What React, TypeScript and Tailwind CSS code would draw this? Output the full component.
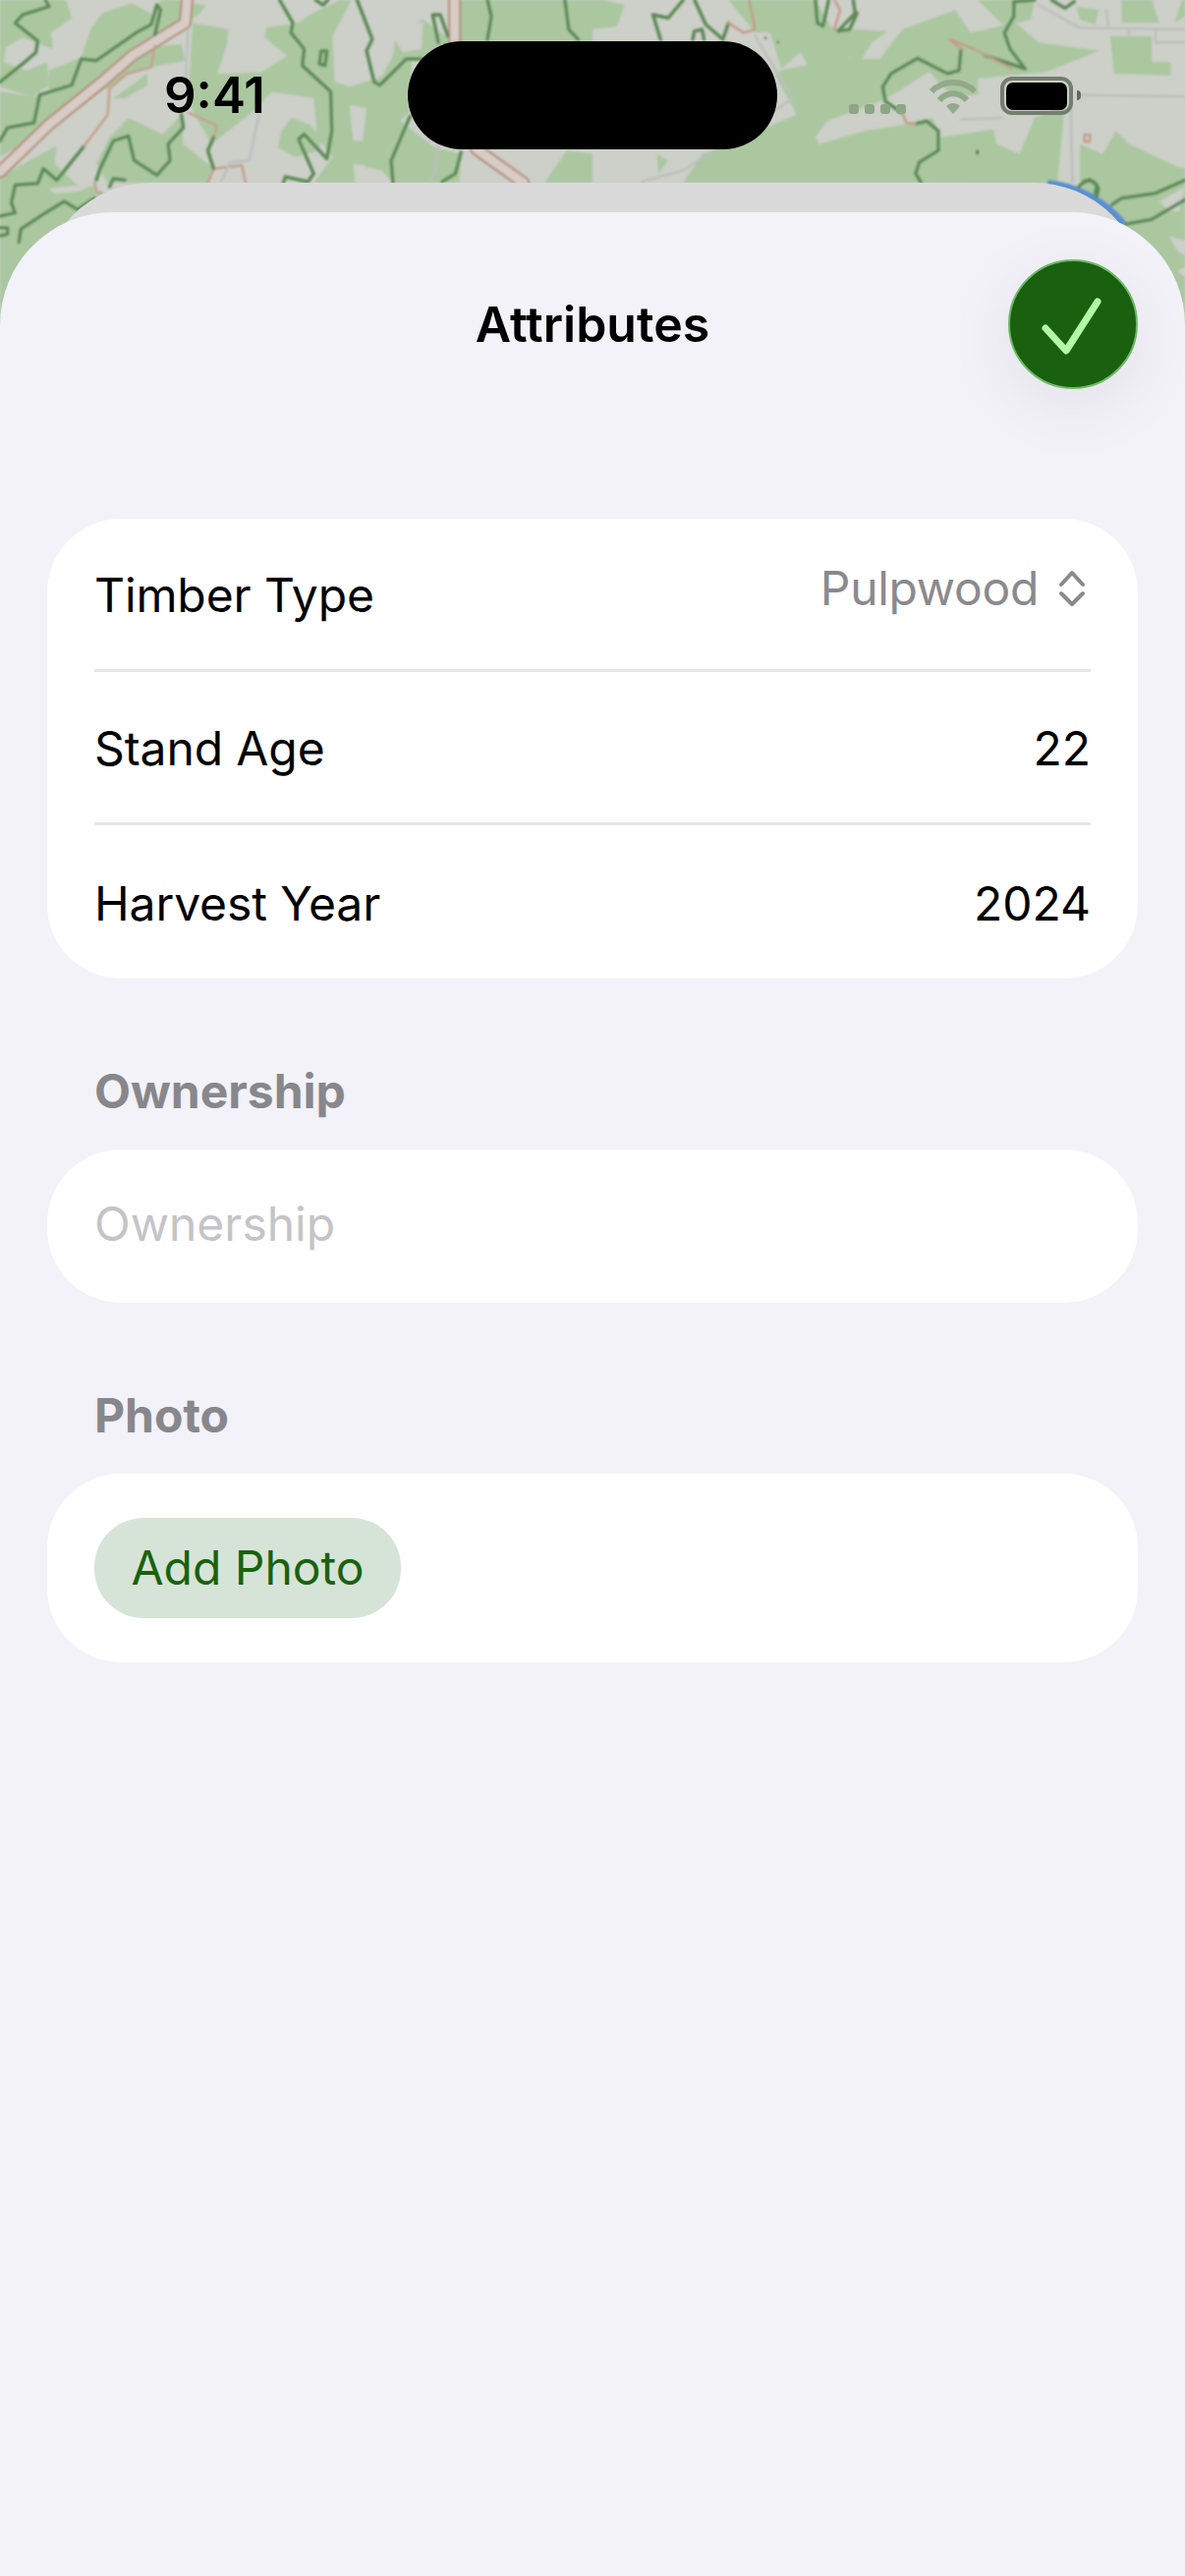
import React from "react";

const GREEN_L = [
  "0,0 175,0 190,55 135,100 140,150 60,115 15,145 10,190 70,215 125,190 130,260 85,295 0,265",
  "270,40 350,10 405,45 425,0 485,0 480,85 420,140 480,135 490,185 400,205 335,225 290,270 225,280 130,285 130,215 215,175 240,90",
  "0,280 90,295 210,245 250,280 190,320 130,390 0,480",
  "300,300 390,225 390,260 330,300",
  "0,540 150,445 145,500 200,560 270,590 200,660 60,780 0,780",
  "340,360 430,410 480,350 485,440 560,510 550,558 285,558 255,500 290,420",
  "510,70 605,90 600,140 575,225 690,222 760,170 700,115 705,85 790,70 820,45 900,0 930,0 880,110 885,250 925,265 1010,235 1040,170 1050,90 1120,60 1190,120 1190,0 1568,0 1568,125 1225,125 1090,185 1085,340 1060,370 1150,450 1220,470 1215,558 1040,558 1010,520 940,505 940,558 830,558 880,480 840,420 830,300 720,280 670,340 560,440 510,340 500,260",
  "745,400 770,360 820,380 850,420 845,460 780,480 735,450",
  "925,330 1010,320 1050,360 1060,410 1000,420 950,435",
  "500,10 545,15 530,40 505,60",
  "1440,558 1500,460 1568,470 1568,558",
];
const GREY_L = [
  "1040,60 1120,70 1115,150 1065,160 1045,120",
  "925,320 970,330 960,430 935,430",
  "935,500 965,505 965,558 940,558",
  "980,530 1005,525 1020,558 990,558",
  "210,30 270,0 185,0",
];
const GREEN_R = [
  "0,0 30,0 85,15 65,80 0,90",
  "160,0 360,0 430,100 470,100 500,210 550,160 600,265 700,205 670,160 590,0",
  "570,80 780,95 740,130 700,200 640,120 570,150",
  "820,90 960,30 1000,100 1120,70 1180,130 1340,155 1200,220 1020,240 1020,290 950,290 890,220 780,300 620,370 590,420 600,440 720,400 830,380 900,360 920,420 1060,395 1070,440 1130,470 1170,360 1250,320 1230,560 870,558 860,558 600,558 240,558 290,470 500,370 540,350 480,220 640,180 760,180",
  "1290,440 1350,470 1385,400 1420,440 1568,520 1568,780 1400,690 1380,640 1290,560",
  "170,470 200,490 175,530",
  "1370,110 1480,110 1480,190 1530,190 1530,230 1380,225",
  "1400,0 1480,0 1500,70 1400,70",
  "1020,0 1170,0 1160,60 1090,80",
  "1280,20 1340,30 1330,75 1290,60",
  "1560,0 1568,0 1568,50 1540,70",
];
const Map = () => (
  <svg className="absolute left-0 top-0" width="1206" height="360" viewBox="0 0 1206 360">
    <defs>
      <filter id="soft" x="-5%" y="-5%" width="110%" height="110%"><feGaussianBlur stdDeviation="1" /></filter>
    </defs>
    <rect width="1206" height="360" fill="#cdcfc9" />
    <g filter="url(#soft)">
      <g transform="scale(0.3846 0.3333)" fill="#aac7a0">
        {GREEN_L.map((p) => <polygon key={p} points={p} />)}
      </g>
      <g transform="scale(0.3846 0.3333)" fill="#cdcfc9">
        {GREY_L.map((p) => <polygon key={p} points={p} />)}
      </g>
      <g transform="translate(603 0) scale(0.3846 0.3333)" fill="#aac7a0">
        {GREEN_R.map((p) => <polygon key={p} points={p} />)}
      </g>
      <polygon points="1100,190 1206,170 1206,360 1100,360" fill="#aac7a0" />
      <polygon points="1180,205 1206,190 1200,215 1190,215" fill="#cdcfc9" />
      <polygon points="1190,240 1206,245 1206,260 1198,255" fill="#cdcfc9" />
      <polygon points="1198,276 1206,272 1206,282" fill="#cdcfc9" />
      <polygon points="0,180 100,190 60,260 0,360" fill="#aac7a0" />
      <polygon points="50,192 100,186 80,195 55,197" fill="#cdcfc9" />

      <g fill="none" strokeLinecap="round" strokeLinejoin="round">
        <g transform="scale(0.3846 0.3333)">
          <path vectorEffect="non-scaling-stroke" d="M495,0 L490,70 L350,170 L270,250 L130,380 L0,525" stroke="#b08a74" strokeWidth="13" />
          <path vectorEffect="non-scaling-stroke" d="M495,0 L490,70 L350,170 L270,250 L130,380 L0,525" stroke="#d8ccc6" strokeWidth="9" />
          <path vectorEffect="non-scaling-stroke" d="M1203,0 L1203,125" stroke="#b08a74" strokeWidth="13" />
          <path vectorEffect="non-scaling-stroke" d="M1203,0 L1203,125" stroke="#d8ccc6" strokeWidth="9" />
          <path vectorEffect="non-scaling-stroke" d="M1260,455 L1385,558" stroke="#b08a74" strokeWidth="13" />
          <path vectorEffect="non-scaling-stroke" d="M1260,455 L1385,558" stroke="#d8ccc6" strokeWidth="9" />
          <g stroke="#c5a08c" strokeWidth="2.5">
            <path vectorEffect="non-scaling-stroke" d="M410,140 L400,205 L335,225 L290,270 L285,350 L220,450" />
            <path vectorEffect="non-scaling-stroke" d="M500,345 L575,385 L565,420 M550,558 L565,515 L640,505 L650,558 M250,558 L255,585 L270,590" />
          </g>
          <g stroke="#bdbdc0" strokeWidth="2.5">
            <path vectorEffect="non-scaling-stroke" d="M685,350 L660,490 L610,495 L585,555 M497,90 L492,240 M1160,440 L1150,530 L1135,555" />
          </g>
        </g>
        <g transform="scale(0.3846 0.3333)" stroke="#5b8a55" strokeWidth="3.5">
          <path vectorEffect="non-scaling-stroke" d="M120,0 L130,20 L60,45 L40,70 L100,125 L95,160 L60,195 L0,250" />
          <path vectorEffect="non-scaling-stroke" d="M0,430 L20,390 L90,375 L105,290 L190,260 L215,180 L255,185 L360,100 L400,75 L415,15 L425,30 L410,105" />
          <path vectorEffect="non-scaling-stroke" d="M220,450 L150,550 L115,515 L100,560 L40,565 L30,620 L40,650 L0,660" />
          <path vectorEffect="non-scaling-stroke" d="M290,570 L300,545 L330,550 M255,550 L265,515 L300,430 L340,415 L355,490 L415,535 L450,490 L445,440 L485,390 L480,350" />
          <path vectorEffect="non-scaling-stroke" d="M565,420 L550,460 L565,515" />
          <path vectorEffect="non-scaling-stroke" d="M50,740 L55,700 L120,650 L170,615 L205,640 L250,605" />
          <path vectorEffect="non-scaling-stroke" d="M0,695 L20,695 L20,715 L0,720" />
          <path vectorEffect="non-scaling-stroke" d="M740,0 L775,70 L770,100 L805,150 L800,200 L875,280 L878,400 L865,485 L805,410 L790,425 L830,530 L815,555 L755,540 L750,558" />
          <path vectorEffect="non-scaling-stroke" d="M850,155 L865,155 L860,200 L845,195 Z" />
          <path vectorEffect="non-scaling-stroke" d="M835,0 L855,15 L868,0" />
          <path vectorEffect="non-scaling-stroke" d="M945,0 L985,120 L970,155 L990,250 L1005,260 L1075,180 L1120,180 M1160,130 L1145,45 L1165,45 L1185,110" />
          <path vectorEffect="non-scaling-stroke" d="M1085,355 L1035,490 L1040,558 M1220,465 L1205,530 L1170,555" />
          <path vectorEffect="non-scaling-stroke" d="M1290,0 L1300,50 L1290,120 M1495,0 L1505,90 L1530,120" />
        </g>
        <g transform="translate(603 0) scale(0.3846 0.3333)">
          <g stroke="#5b8a55" strokeWidth="3.5">
            <path vectorEffect="non-scaling-stroke" d="M160,45 L180,120 M160,45 L200,55 L240,0 M345,120 L360,70 M265,120 L270,95 L290,90 L295,120 M270,0 L300,75 L345,120" />
            <path vectorEffect="non-scaling-stroke" d="M590,0 L595,70 L610,80 L625,0 M690,0 L695,40 L650,95 L680,90 L700,40" />
            <path vectorEffect="non-scaling-stroke" d="M1170,0 L1115,5 L1115,50 L1090,100 L1105,150 L1145,210 L1040,170" />
            <path vectorEffect="non-scaling-stroke" d="M1215,0 L1250,25 L1275,5" />
            <path vectorEffect="non-scaling-stroke" d="M975,150 L970,215 L940,225 L860,178 L790,225 L768,265 L775,310 L820,345 M855,378 L885,370 L915,400 L915,460 L865,495 L855,530 L870,558" />
            <path vectorEffect="non-scaling-stroke" d="M1300,558 L1315,548 L1335,565 L1330,590 M1375,625 L1400,605 L1490,590 L1568,550 M1410,685 L1480,670 L1568,610" />
          </g>
          <g stroke="#c39d88" strokeWidth="2.5">
            <path vectorEffect="non-scaling-stroke" d="M360,70 L400,100 L430,90 L415,0 M640,90 L655,30 L640,0 M975,150 L945,120 L1010,150 L1110,210 M820,345 L830,375 L855,378" />
            <path vectorEffect="non-scaling-stroke" d="M1302,412 L1316,412 L1316,432 L1302,432 Z" />
          </g>
          <g stroke="#bcbfbb" strokeWidth="2.5">
            <path vectorEffect="non-scaling-stroke" d="M430,110 L530,300 L400,400 L240,520 L130,555" />
            <path vectorEffect="non-scaling-stroke" d="M1180,15 L1290,85 L1568,90 M1490,90 L1490,130 L1568,130 M1290,290 L1568,295 M1265,300 L1270,558 M975,365 L1085,360 M1420,90 L1420,110 M1360,30 L1365,85" />
          </g>
          <rect x="455" y="112" width="6" height="8" fill="#5d8757" />
          <rect x="488" y="125" width="6" height="8" fill="#5d8757" />
          <rect x="1015" y="458" width="7" height="14" fill="#4d6b48" />
        </g>
        <path d="M1066,187 A113,113 0 0 1 1143,228" stroke="#5a8fd0" strokeWidth="8" strokeLinecap="butt" />
        <path d="M1098,190 L1104,184 Q1115,182 1118,192 L1116,200" stroke="#5b8a55" strokeWidth="3.5" />
      </g>
    </g>
  </svg>
);

const StatusBar = () => (
  <div className="absolute left-0 top-0 w-[1206px] h-[186px]">
    <span className="absolute left-[167px] top-[67px] text-[51px] leading-[60px] font-semibold text-black">9:41</span>
    <div className="absolute left-[415px] top-[42px] w-[376px] h-[110px] rounded-full bg-black" />
    <div className="absolute left-[864px] top-[106px] flex gap-[6px]">
      <div className="w-[10px] h-[10px] rounded-[3px] bg-[#8ea588]" />
      <div className="w-[10px] h-[10px] rounded-[3px] bg-[#8ea588]" />
      <div className="w-[10px] h-[10px] rounded-[3px] bg-[#8ea588]" />
      <div className="w-[10px] h-[10px] rounded-[3px] bg-[#8ea588]" />
    </div>
    <svg className="absolute left-[945px] top-[78px]" width="50" height="38" viewBox="0 0 50 38" fill="none">
      <path d="M3 15 C15 3 35 3 47 15" stroke="#92a98c" strokeWidth="6" />
      <path d="M11 24 C19 15 31 15 39 24" stroke="#92a98c" strokeWidth="6" />
      <path d="M18 30 C22 26 28 26 32 30 L25 38 Z" fill="#92a98c" />
    </svg>
    <div className="absolute left-[1018px] top-[78px] w-[74px] h-[39px] rounded-[12px] border-[4px] border-[#737e70] flex items-center justify-center">
      <div className="w-[62px] h-[28px] rounded-[7px] bg-black" />
    </div>
    <div className="absolute left-[1096px] top-[92px] w-[4px] h-[10px] rounded-r-full bg-[#5f6a5d]" />
  </div>
);

const Row = ({ label, children, last }: { label: string; children: React.ReactNode; last?: boolean }) => (
  <div className={`h-[156px] pt-[3px] flex items-center justify-between ${last ? "" : "border-b-[3px] border-[#e6e6e8]"}`}>
    <span className="text-[48px] leading-none tracking-[-0.1px] text-black">{label}</span>
    {children}
  </div>
);

const SectionLabel = ({ children }: { children: React.ReactNode }) => (
  <div className="h-[174px] flex items-end pl-[48px] pb-[35px] text-[48px] leading-none font-bold text-[#87878c]">{children}</div>
);

export default function App() {
  return (
    <div className="relative w-[1206px] h-[2622px] overflow-hidden bg-[#f2f2f8] pt-[186px] font-['Inter',sans-serif]">
      <Map />
      <StatusBar />
      <div className="relative mx-[41px] h-[2436px] pt-[30px] rounded-t-[113px] bg-[#dadada]">
        <div className="relative -mx-[41px] h-[2406px] rounded-t-[115px] bg-[#f2f2f8] px-[48px]">
          <div className="h-[228px] mb-[84px] flex items-center justify-center text-[50px] font-semibold text-black">Attributes</div>
          <button className="absolute right-[48px] top-[48px] w-[132px] h-[132px] rounded-full bg-[#19610f] border-[2px] border-[#6fb86a] shadow-[0_16px_70px_rgba(0,0,0,0.08)] flex items-center justify-center">
            <svg width="132" height="132" viewBox="0 0 132 132" fill="none" className="shrink-0">
              <path d="M38 70 L59 93 L91 43" stroke="#b4f7a8" strokeWidth="7" strokeLinecap="round" strokeLinejoin="round" />
            </svg>
          </button>

          <div className="rounded-[75px] bg-white px-[48px]">
            <Row label="Timber Type">
              <div className="flex items-center gap-[21px] pb-[14px] pr-[6px] text-[48px] leading-none tracking-[-0.3px] text-[#8a8a8e]">
                <span>Pulpwood</span>
                <svg width="26" height="38" viewBox="0 0 26 38" fill="none">
                  <path d="M2 15 L13 3 L24 15 M2 24 L13 35 L24 24" stroke="#8a8a8e" strokeWidth="4" strokeLinecap="round" strokeLinejoin="round" />
                </svg>
              </div>
            </Row>
            <Row label="Stand Age"><span className="text-[48px] leading-none text-black">22</span></Row>
            <Row label="Harvest Year" last><span className="text-[48px] leading-none text-black">2024</span></Row>
          </div>

          <SectionLabel>Ownership</SectionLabel>
          <div className="h-[156px] pb-[5px] rounded-[75px] bg-white px-[48px] flex items-center text-[48px] leading-none text-[#c4c4c7]">Ownership</div>

          <SectionLabel>Photo</SectionLabel>
          <div className="rounded-[75px] bg-white px-[48px] py-[45px]">
            <div className="w-[312px] h-[102px] rounded-[50px] bg-[#d6e4d7] flex items-center justify-center text-[48px] leading-none text-[#19610f]">Add Photo</div>
          </div>
        </div>
      </div>
    </div>
  );
}
